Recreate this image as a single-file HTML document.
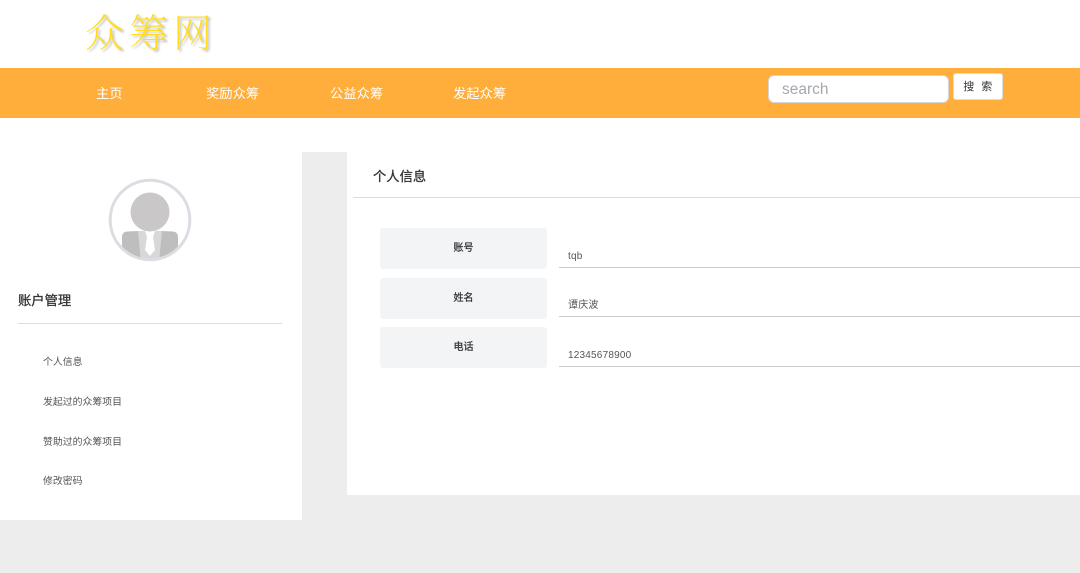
<!DOCTYPE html>
<html lang="zh-CN">
<head>
<meta charset="utf-8">
<title>众筹网</title>
<style>
html,body{margin:0;padding:0;}
body{width:1080px;height:573px;overflow:hidden;position:relative;background:#ededed;font-family:"Liberation Sans","Noto Sans CJK SC",sans-serif;color:#333;}
.a{position:absolute;white-space:nowrap;}
#top{left:0;top:0;width:1080px;height:68px;background:#fff;}
#logo{left:85px;top:6px;font-family:"Noto Serif CJK SC","WenQuanYi Zen Hei",serif;font-size:39px;line-height:50px;letter-spacing:5px;color:#ffdc1e;font-weight:200;text-shadow:2px 2px 2px #bdbdbd;}
#nav{left:0;top:68px;width:1080px;height:50px;background:#ffae3b;}
.n{top:85px;font-size:13.3px;line-height:18px;color:#fff;}
#search{left:768px;top:75px;width:181px;height:28px;box-sizing:border-box;background:#fff;border:1px solid #d5d5d5;border-radius:6px;padding-left:13px;font-size:15.5px;line-height:28px;color:#a4a9ae;}
#btn{left:953px;top:73px;width:50px;height:27px;box-sizing:border-box;background:#fff;border:1px solid #ddd;border-radius:3px;text-align:center;font-size:11px;line-height:27px;letter-spacing:.5px;color:#333;word-spacing:3px;}
#main{left:0;top:118px;width:1080px;height:34px;background:#fff;}
#side{left:0;top:152px;width:302px;height:368px;background:#fff;}
#panel{left:347px;top:152px;width:733px;height:343px;background:#fff;}
#h1{left:18px;top:292px;font-size:13.3px;line-height:18px;color:#333;-webkit-text-stroke:.3px #333;}
#l1{left:18px;top:323px;width:264px;height:1px;background:#ddd;}
.m{left:43px;font-size:9.9px;line-height:14px;color:#555;}
#h2{left:373px;top:168px;font-size:13.3px;line-height:18px;color:#333;-webkit-text-stroke:.3px #333;}
#l2{left:353px;top:197px;width:727px;height:1px;background:#ddd;}
.lab{left:380px;width:167px;height:41px;background:#f3f4f6;border-radius:3px;text-align:center;font-size:10px;line-height:41px;color:#333;-webkit-text-stroke:.25px #333;}
.val{left:568px;font-size:10px;line-height:14px;color:#555;letter-spacing:.2px;}
.ul{left:559px;width:521px;height:1px;background:#ccc;}
</style>
</head>
<body>
<div class="a" id="top"></div>
<div class="a" id="logo">众筹网</div>
<div class="a" id="nav"></div>
<div class="a n" style="left:96px">主页</div>
<div class="a n" style="left:206px">奖励众筹</div>
<div class="a n" style="left:330px">公益众筹</div>
<div class="a n" style="left:453px">发起众筹</div>
<div class="a" id="search">search</div>
<div class="a" id="btn">搜 索</div>
<div class="a" id="main"></div>
<div class="a" id="side"></div>
<div class="a" id="panel"></div>
<svg class="a" style="left:108px;top:178px" width="84" height="84" viewBox="0 0 84 84">
<defs><clipPath id="c"><circle cx="42" cy="42" r="39.5"/></clipPath></defs>
<circle cx="42" cy="42" r="40" fill="#fff"/>
<g clip-path="url(#c)">
<path d="M14 84V59q0-5 5-5.500l11-.5h24l11 .5q5 .5 5 5.500v25z" fill="#bebebe"/>
<path d="M30 53h24l-3 31H33z" fill="#d8d8d8"/>
<path d="M37 53h10l-2 6 2 13-5 6-5-6 2-13z" fill="#fff"/>
</g>
<circle cx="42" cy="34" r="19.500" fill="#c9c7c8"/>
<circle cx="42" cy="42" r="39.800" fill="none" stroke="#dadde1" stroke-width="3"/>
</svg>
<div class="a" id="h1">账户管理</div>
<div class="a" id="l1"></div>
<div class="a m" style="top:356px">个人信息</div>
<div class="a m" style="top:396px">发起过的众筹项目</div>
<div class="a m" style="top:436px">赞助过的众筹项目</div>
<div class="a m" style="top:475px">修改密码</div>
<div class="a" id="h2">个人信息</div>
<div class="a" id="l2"></div>
<div class="a lab" style="top:228px">账号</div>
<div class="a lab" style="top:278px">姓名</div>
<div class="a lab" style="top:327px">电话</div>
<div class="a val" style="top:250px">tqb</div>
<div class="a val" style="top:299px">谭庆波</div>
<div class="a val" style="top:349px">12345678900</div>
<div class="a ul" style="top:267px"></div>
<div class="a ul" style="top:316px"></div>
<div class="a ul" style="top:366px"></div>
</body>
</html>
